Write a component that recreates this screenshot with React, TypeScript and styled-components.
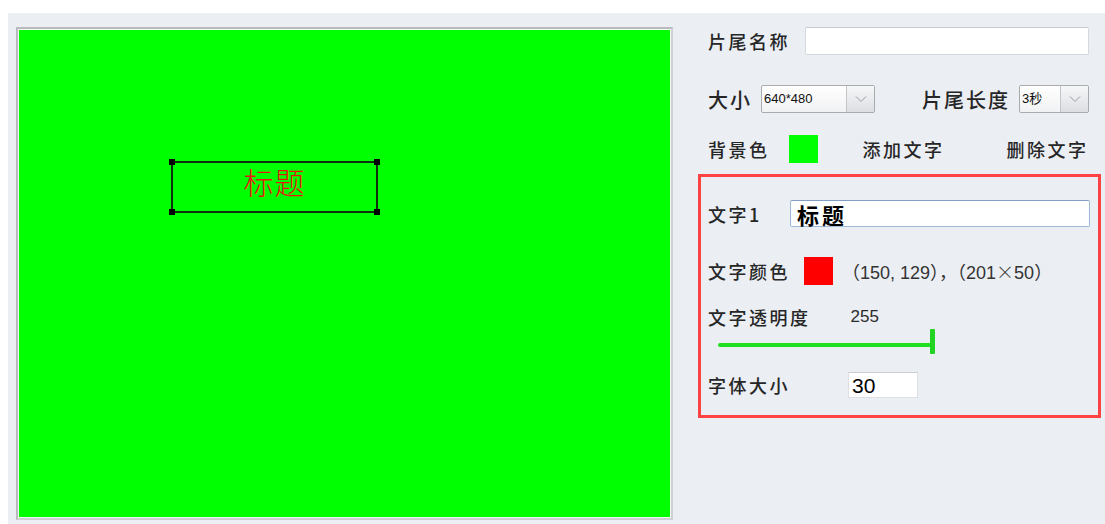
import styled, { createGlobalStyle } from 'styled-components'

const GlobalStyle = createGlobalStyle`
  html, body {
    margin: 0;
    padding: 0;
    background: #ffffff;
  }
  body {
    font-family: "Noto Sans CJK SC", "Noto Sans", sans-serif;
  }
`;

const Page = styled.div`
  width: 1105px;
  height: 524px;
  padding: 13px 0 0 8px;
  box-sizing: border-box;
  overflow: hidden;
`;

const Panel = styled.div`
  display: flex;
  height: 511px;
  background: #ebeef3;
`;

const CanvasFrame = styled.div`
  margin: 14px 0 0 8px;
  width: 657px;
  height: 493px;
  box-sizing: border-box;
  border: 2px solid #b9babd;
  border-right-color: #cfd0d3;
  border-bottom-color: #cfd0d3;
  padding: 1px;
  background: #f4f6f4;
  flex-shrink: 0;
`;

const Canvas = styled.div`
  position: relative;
  width: 100%;
  height: 100%;
  background: #00ff00;
`;

const Selection = styled.div`
  position: absolute;
  left: 152px;
  top: 131px;
  width: 207px;
  height: 52px;
  box-sizing: border-box;
  border: 2px solid #103010;
  display: flex;
  justify-content: center;
`;

const Handle = styled.span<{ $x: 'left' | 'right'; $y: 'top' | 'bottom' }>`
  position: absolute;
  width: 6px;
  height: 6px;
  background: #000;
  ${(p) => p.$x}: -4px;
  ${(p) => p.$y}: -4px;
`;

const SelectionText = styled.span`
  font-size: 30px;
  font-weight: 300;
  line-height: 36px;
  color: #e8160c;
  letter-spacing: 1px;
`;

const Sidebar = styled.div`
  margin-left: 25px;
  width: 403px;
  display: flex;
  flex-direction: column;
`;

const Row = styled.div<{ $top: number; $h: number; $pad?: number; $padRight?: number }>`
  display: flex;
  align-items: center;
  margin-top: ${(p) => p.$top}px;
  height: ${(p) => p.$h}px;
  padding-left: ${(p) => p.$pad ?? 10}px;
  padding-right: ${(p) => p.$padRight ?? 12}px;
`;

const Label = styled.span<{ $w?: number; $big?: boolean }>`
  flex-shrink: 0;
  width: ${(p) => (p.$w ? `${p.$w}px` : 'auto')};
  font-size: ${(p) => (p.$big ? 20 : 18)}px;
  letter-spacing: ${(p) => (p.$big ? 2 : 2.5)}px;
  font-weight: 500;
  color: #262626;
  white-space: nowrap;
`;

const TextInput = styled.div<{ $focus?: boolean }>`
  flex: 1;
  height: 100%;
  box-sizing: border-box;
  background: #ffffff;
  border: 1px solid ${(p) => (p.$focus ? '#9dbad8' : '#d6d9de')};
  border-top-color: ${(p) => (p.$focus ? '#7f9fc4' : '#c6c9ce')};
  border-radius: 2px;
  display: flex;
  align-items: center;
  padding-left: 6px;
`;

const InputValue = styled.span`
  font-size: 22px;
  font-weight: 700;
  color: #000;
  line-height: 25px;
  letter-spacing: 3px;
  padding-top: 2px;
`;

const Select = styled.div<{ $w: number }>`
  width: ${(p) => p.$w}px;
  height: 28px;
  box-sizing: border-box;
  display: flex;
  border: 1px solid #a9abaf;
  border-radius: 2px;
  background: linear-gradient(#ffffff, #f1f2f4);
  flex-shrink: 0;
`;

const SelectValue = styled.span`
  flex: 1;
  padding-left: 2px;
  font-family: "Liberation Sans", Arial, "Noto Sans CJK SC", sans-serif;
  font-size: 13px;
  line-height: 26px;
  color: #111;
  white-space: nowrap;
`;

const SelectButton = styled.span`
  width: 27px;
  border-left: 1px solid #c3c5c9;
  background: linear-gradient(#f6f7f8, #dcdee2);
  display: flex;
  align-items: center;
  justify-content: center;
`;

const Swatch = styled.span<{ $color: string; $left: number }>`
  width: 29px;
  height: 28px;
  margin-left: ${(p) => p.$left}px;
  background: ${(p) => p.$color};
  flex-shrink: 0;
`;

const ActionButton = styled.span<{ $left: number }>`
  margin-left: ${(p) => p.$left}px;
  font-size: 18px;
  letter-spacing: 2.5px;
  font-weight: 500;
  color: #262626;
  white-space: nowrap;
`;

const PropsBox = styled.div`
  margin-top: 11px;
  height: 244px;
  box-sizing: border-box;
  border: 3px solid #ff4343;
  display: flex;
  flex-direction: column;
`;

const Info = styled.span<{ $left: number }>`
  margin-left: ${(p) => p.$left}px;
  font-family: "Liberation Sans", "Noto Sans CJK SC", sans-serif;
  font-size: 18px;
  color: #333;
  white-space: nowrap;
`;

const WideSign = styled.span`
  font-family: "Noto Sans CJK SC", sans-serif;
  font-weight: 300;
`;

const Number = styled.span<{ $left: number }>`
  margin-left: ${(p) => p.$left}px;
  font-family: "Liberation Sans", Arial, sans-serif;
  font-size: 17px;
  color: #2a2a2a;
`;

const SliderTrack = styled.div`
  position: relative;
  margin-left: 10px;
  width: 214px;
  height: 4px;
  background: #1ee01e;
  border-radius: 2px;
`;

const SliderThumb = styled.span`
  position: absolute;
  right: -3px;
  top: -14px;
  width: 5px;
  height: 25px;
  background: #22d422;
  border-radius: 1px;
`;

const SmallInput = styled.div`
  margin-left: 58px;
  width: 70px;
  height: 26px;
  box-sizing: border-box;
  background: #fff;
  border: 1px solid #dcdfe3;
  border-top-color: #c9ccd0;
  display: flex;
  align-items: flex-end;
  padding-left: 3px;
  overflow: hidden;
`;

const SmallValue = styled.span`
  font-family: "Liberation Sans", Arial, sans-serif;
  font-size: 21px;
  line-height: 22px;
  color: #000;
`;

const Chevron = () => (
  <svg width="12" height="8" viewBox="0 0 12 8">
    <polyline points="1,1.5 6,6.5 11,1.5" fill="none" stroke="#9a9ca0" strokeWidth="1" />
  </svg>
);

export default function App() {
  return (
    <>
      <GlobalStyle />
      <Page>
        <Panel>
          <CanvasFrame>
            <Canvas>
              <Selection>
                <Handle $x="left" $y="top" />
                <Handle $x="right" $y="top" />
                <Handle $x="left" $y="bottom" />
                <Handle $x="right" $y="bottom" />
                <SelectionText>标题</SelectionText>
              </Selection>
            </Canvas>
          </CanvasFrame>

          <Sidebar>
            <Row $top={14} $h={28}>
              <Label $w={97}>片尾名称</Label>
              <TextInput />
            </Row>

            <Row $top={30} $h={28}>
              <Label $w={53} $big>大小</Label>
              <Select $w={114}>
                <SelectValue>640*480</SelectValue>
                <SelectButton><Chevron /></SelectButton>
              </Select>
              <Label $w={97} $big style={{ marginLeft: 47 }}>片尾长度</Label>
              <Select $w={70}>
                <SelectValue>3秒</SelectValue>
                <SelectButton><Chevron /></SelectButton>
              </Select>
            </Row>

            <Row $top={21} $h={29}>
              <Label>背景色</Label>
              <Swatch $color="#00ff00" $left={19} />
              <ActionButton $left={45}>添加文字</ActionButton>
              <ActionButton $left={62}>删除文字</ActionButton>
            </Row>

            <PropsBox>
              <Row $top={23} $h={27} $pad={7} $padRight={8}>
                <Label $w={82}>文字1</Label>
                <TextInput $focus>
                  <InputValue>标题</InputValue>
                </TextInput>
              </Row>

              <Row $top={30} $h={28} $pad={7} $padRight={8}>
                <Label>文字颜色</Label>
                <Swatch $color="#ff0000" $left={14} />
                <Info $left={9}>
                  （150, 129），（201<WideSign>×</WideSign>50）
                </Info>
              </Row>

              <Row $top={20} $h={24} $pad={7} $padRight={8}>
                <Label>文字透明度</Label>
                <Number $left={40}>255</Number>
              </Row>

              <Row $top={3} $h={25} $pad={7} $padRight={8}>
                <SliderTrack>
                  <SliderThumb />
                </SliderTrack>
              </Row>

              <Row $top={15} $h={26} $pad={7} $padRight={8}>
                <Label>字体大小</Label>
                <SmallInput>
                  <SmallValue>30</SmallValue>
                </SmallInput>
              </Row>
            </PropsBox>
          </Sidebar>
        </Panel>
      </Page>
    </>
  );
}
